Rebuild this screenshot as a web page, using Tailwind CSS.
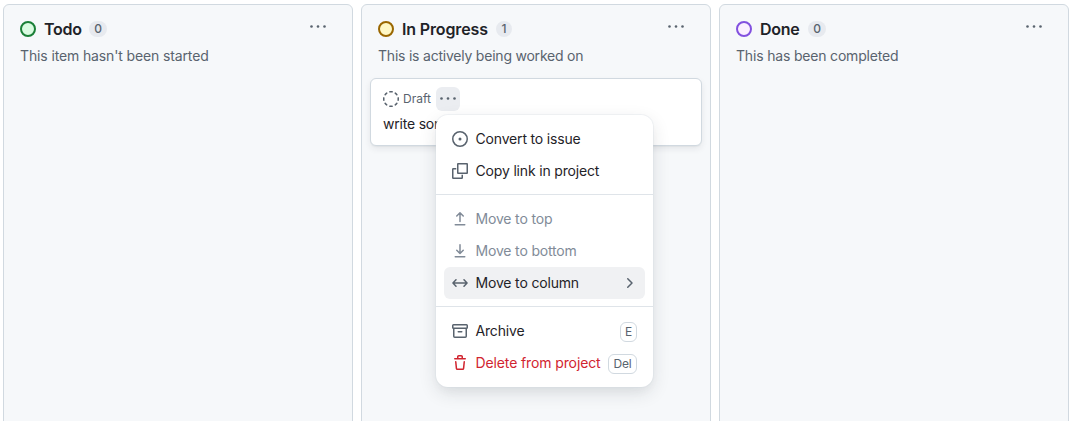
<!DOCTYPE html>
<html lang="en">
<head>
<meta charset="utf-8">
<title>Project board</title>
<script src="https://cdn.jsdelivr.net/npm/@tailwindcss/browser@4"></script>
</head>
<body class="bg-white font-['Inter',sans-serif] text-sm text-[#1f2328]">
<main class="flex h-[421px] gap-2 overflow-hidden pl-[3px] pt-1">
  <section class="h-[440px] w-[350px] shrink-0 rounded-md border border-[#d1d9e0] bg-[#f6f8fa]">
    <header class="mt-3 flex h-6 items-center pl-4 pr-[26px]">
      <span class="size-4 rounded-full border-2 border-[#1a7f37] bg-[#dafbe1]"></span>
      <h2 class="ml-2 w-[37px] whitespace-nowrap text-base font-semibold tracking-[-0.25px]">Todo</h2>
      <span class="ml-2 flex h-4 w-[18px] items-center justify-center rounded-full bg-[#e7eaef] text-xs font-medium text-[#59636e]">0</span>
      <svg class="-mt-1 ml-auto size-4 fill-[#59636e]" viewBox="0 0 16 16"><circle cx="1.5" cy="7.5" r="1.3"/><circle cx="8" cy="7.5" r="1.3"/><circle cx="14.5" cy="7.5" r="1.3"/></svg>
    </header>
    <p class="mt-1 pl-4 leading-[22px] tracking-[-0.13px] text-[#59636e]">This item hasn't been started</p>
  </section>

  <section class="relative h-[440px] w-[350px] shrink-0 rounded-md border border-[#d1d9e0] bg-[#f6f8fa]">
    <header class="mt-3 flex h-6 items-center pl-4 pr-[26px]">
      <span class="size-4 rounded-full border-2 border-[#9a6700] bg-[#fff8c5]"></span>
      <h2 class="ml-2 w-[86px] whitespace-nowrap text-base font-semibold tracking-[-0.14px]">In Progress</h2>
      <span class="ml-2 flex size-4 items-center justify-center rounded-full bg-[#e7eaef] text-xs font-medium text-[#59636e]">1</span>
      <svg class="-mt-1 ml-auto size-4 fill-[#59636e]" viewBox="0 0 16 16"><circle cx="1.5" cy="7.5" r="1.3"/><circle cx="8" cy="7.5" r="1.3"/><circle cx="14.5" cy="7.5" r="1.3"/></svg>
    </header>
    <p class="mt-1 pl-4 leading-[22px] tracking-[-0.22px] text-[#59636e]">This is actively being worked on</p>
    <article class="mx-2 mt-[11px] h-[68px] rounded-md border border-[#d1d9e0] bg-white px-3 pt-2 shadow-[0_1px_1px_#25292e0a,0_3px_6px_#25292e14]">
      <div class="flex h-6 items-center">
        <svg class="size-4 fill-[#59636e]" viewBox="0 0 16 16"><path d="M14.307 11.655a.75.75 0 0 1 .165 1.048 8.05 8.05 0 0 1-1.769 1.77.75.75 0 0 1-.883-1.214 6.552 6.552 0 0 0 1.44-1.439.75.75 0 0 1 1.047-.165Zm-2.652-9.962a.75.75 0 0 1 1.048-.165 8.05 8.05 0 0 1 1.77 1.769.75.75 0 0 1-1.214.883 6.552 6.552 0 0 0-1.439-1.44.75.75 0 0 1-.165-1.047ZM6.749.097a8.075 8.075 0 0 1 2.502 0 .75.75 0 1 1-.233 1.482 6.558 6.558 0 0 0-2.036 0A.751.751 0 0 1 6.749.097ZM.955 6.125a.75.75 0 0 1 .624.857 6.558 6.558 0 0 0 0 2.036.75.75 0 1 1-1.482.233 8.075 8.075 0 0 1 0-2.502.75.75 0 0 1 .858-.624Zm14.09 0a.75.75 0 0 1 .858.624c.13.829.13 1.673 0 2.502a.75.75 0 1 1-1.482-.233 6.558 6.558 0 0 0 0-2.036.75.75 0 0 1 .624-.857Zm-8.92 8.92a.75.75 0 0 1 .857-.624 6.558 6.558 0 0 0 2.036 0 .75.75 0 1 1 .233 1.482c-.829.13-1.673.13-2.502 0a.75.75 0 0 1-.624-.858Zm-4.432-3.39a.75.75 0 0 1 1.048.165 6.552 6.552 0 0 0 1.439 1.44.751.751 0 0 1-.883 1.212 8.05 8.05 0 0 1-1.77-1.769.75.75 0 0 1 .166-1.048Zm2.652-9.962A.75.75 0 0 1 4.18 2.74a6.556 6.556 0 0 0-1.44 1.44.751.751 0 0 1-1.212-.883 8.05 8.05 0 0 1 1.769-1.77.75.75 0 0 1 1.048.166Z"/></svg>
        <span class="ml-1 w-[33px] whitespace-nowrap text-xs text-[#59636e]">Draft</span>
        <span class="flex size-6 items-center justify-center rounded-md bg-[#ebedf1]"><svg class="size-4 fill-[#59636e]" viewBox="0 0 16 16"><circle cx="1.5" cy="7.5" r="1.3"/><circle cx="8" cy="7.5" r="1.3"/><circle cx="14.5" cy="7.5" r="1.3"/></svg></span>
      </div>
      <p class="mt-[3px] leading-5 tracking-[-0.2px]">write something</p>
    </article>

    <div class="absolute left-[74px] top-[110px] h-[272px] w-[217px] rounded-xl bg-white tracking-[-0.17px] shadow-[0_0_0_1px_#d1d9e040,0_6px_12px_-3px_#25292e0a,0_6px_18px_0_#25292e1f]">
      <ul class="px-2 pt-2">
        <li class="flex h-8 items-center gap-[7.5px] px-2"><svg class="size-4 fill-[#59636e]" viewBox="0 0 16 16"><path d="M8 9.5a1.5 1.5 0 1 0 0-3 1.5 1.5 0 0 0 0 3Z"/><path d="M8 0a8 8 0 1 1 0 16A8 8 0 0 1 8 0ZM1.5 8a6.5 6.5 0 1 0 13 0 6.5 6.5 0 0 0-13 0Z"/></svg>Convert to issue</li>
        <li class="flex h-8 items-center gap-[7.5px] px-2"><svg class="size-4 fill-none stroke-[#59636e] stroke-[1.5]" viewBox="0 0 16 16"><rect x="5.75" y=".75" width="9.5" height="9.5" rx=".3"/><path d="M4.25 5.75H1.25a.5.5 0 0 0-.5.5v8.5a.5.5 0 0 0 .5.5h8.5a.5.5 0 0 0 .5-.5v-3"/></svg>Copy link in project</li>
      </ul>
      <hr class="mt-[7px] border-[#d1d9e0b3]">
      <ul class="px-2 pt-2">
        <li class="flex h-8 items-center gap-[7.5px] px-2 text-[#818b98]"><svg class="size-4 fill-none stroke-current stroke-[1.5] [stroke-linecap:round] [stroke-linejoin:round]" viewBox="0 0 16 16"><path d="M8 10.5V2M4.75 5 8 1.75 11.25 5M3.25 13.75h9.5"/></svg>Move to top</li>
        <li class="flex h-8 items-center gap-[7.5px] px-2 text-[#818b98]"><svg class="size-4 fill-none stroke-current stroke-[1.5] [stroke-linecap:round] [stroke-linejoin:round]" viewBox="0 0 16 16"><path d="M8 1.75v8.5M4.75 7.2 8 10.45l3.25-3.25M3.25 13.75h9.5"/></svg>Move to bottom</li>
        <li class="flex h-8 items-center gap-[7.5px] rounded-md bg-[#f0f1f3] px-2"><svg class="size-4 fill-none stroke-[#59636e] stroke-[1.5] [stroke-linecap:round] [stroke-linejoin:round]" viewBox="0 0 16 16"><path d="M1 8h14M4 4.75.95 8 4 11.25M12 4.75 15.05 8 12 11.25"/></svg>Move to column<svg class="ml-auto size-4 fill-none stroke-[#59636e] stroke-[1.5] [stroke-linecap:round] [stroke-linejoin:round]" viewBox="0 0 16 16"><path d="M6.75 3.75 11 8l-4.25 4.25"/></svg></li>
      </ul>
      <hr class="mt-[7px] border-[#d1d9e0b3]">
      <ul class="px-2 pt-2">
        <li class="flex h-8 items-center gap-[7.5px] px-2"><svg class="size-4 fill-none stroke-[#59636e] stroke-[1.5] [stroke-linecap:round]" viewBox="0 0 16 16"><rect x=".75" y="1.75" width="14.5" height="3.5" rx=".8"/><path d="M1.75 6v7.25c0 .55.45 1 1 1h10.5c.55 0 1-.45 1-1V6M6.25 8.75h3.5"/></svg>Archive<kbd class="ml-auto mt-px flex h-5 w-[17px] items-center justify-center rounded-md border border-[#d1d9e0] font-['Inter',sans-serif] text-xs text-[#59636e]">E</kbd></li>
        <li class="flex h-8 items-center whitespace-nowrap px-2 tracking-[-0.12px] text-[#d1242f]"><svg class="mr-[7.5px] size-4 shrink-0 fill-current" viewBox="0 0 16 16"><path d="M11 1.75V3h2.25a.75.75 0 0 1 0 1.5H2.75a.75.75 0 0 1 0-1.5H5V1.75C5 .784 5.784 0 6.75 0h2.5C10.216 0 11 .784 11 1.75ZM4.496 6.675l.66 6.6a.25.25 0 0 0 .249.225h5.19a.25.25 0 0 0 .249-.225l.66-6.6a.75.75 0 0 1 1.492.149l-.66 6.6A1.748 1.748 0 0 1 10.595 15h-5.19a1.75 1.75 0 0 1-1.741-1.575l-.66-6.6a.75.75 0 1 1 1.492-.15ZM6.5 1.75V3h3V1.75a.25.25 0 0 0-.25-.25h-2.5a.25.25 0 0 0-.25.25Z"/></svg>Delete from project<kbd class="ml-auto mt-px flex h-5 w-[29px] items-center justify-center rounded-md border border-[#d1d9e0] font-['Inter',sans-serif] text-xs text-[#59636e]">Del</kbd></li>
      </ul>
    </div>
  </section>

  <section class="h-[440px] w-[350px] shrink-0 rounded-md border border-[#d1d9e0] bg-[#f6f8fa]">
    <header class="mt-3 flex h-6 items-center pl-4 pr-[26px]">
      <span class="size-4 rounded-full border-2 border-[#8250df] bg-[#fbefff]"></span>
      <h2 class="ml-2 w-10 whitespace-nowrap text-base font-semibold tracking-[-0.25px]">Done</h2>
      <span class="ml-2 flex h-4 w-[18px] items-center justify-center rounded-full bg-[#e7eaef] text-xs font-medium text-[#59636e]">0</span>
      <svg class="-mt-1 ml-auto size-4 fill-[#59636e]" viewBox="0 0 16 16"><circle cx="1.5" cy="7.5" r="1.3"/><circle cx="8" cy="7.5" r="1.3"/><circle cx="14.5" cy="7.5" r="1.3"/></svg>
    </header>
    <p class="mt-1 pl-4 leading-[22px] tracking-[-0.18px] text-[#59636e]">This has been completed</p>
  </section>
</main>
</body>
</html>
